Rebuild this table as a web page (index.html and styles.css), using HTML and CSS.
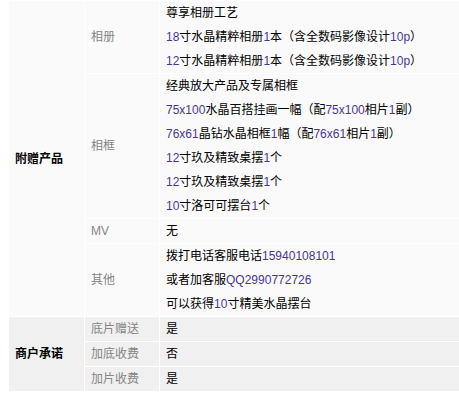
FILE: index.html
```html
<!DOCTYPE html>
<html lang="zh-CN">
<head>
<meta charset="utf-8">
<title>附赠产品</title>
<link rel="stylesheet" href="styles.css">
</head>
<body>
<table class="info">
  <colgroup>
    <col class="c1"><col class="c2"><col class="c3">
  </colgroup>
  <tbody class="sec-a">
    <tr>
      <th class="group" rowspan="4">附赠产品</th>
      <td class="label">相册</td>
      <td class="val">
        <div>尊享相册工艺</div>
        <div><span class="num">18</span>寸水晶精粹相册<span class="num">1</span>本（含全数码影像设计<span class="num">10p</span>）</div>
        <div><span class="num">12</span>寸水晶精粹相册<span class="num">1</span>本（含全数码影像设计<span class="num">10p</span>）</div>
      </td>
    </tr>
    <tr>
      <td class="label">相框</td>
      <td class="val">
        <div>经典放大产品及专属相框</div>
        <div><span class="num">75x100</span>水晶百搭挂画一幅（配<span class="num">75x100</span>相片<span class="num">1</span>副）</div>
        <div><span class="num">76x61</span>晶钻水晶相框<span class="num">1</span>幅（配<span class="num">76x61</span>相片<span class="num">1</span>副）</div>
        <div><span class="num">12</span>寸玖及精致桌摆<span class="num">1</span>个</div>
        <div><span class="num">12</span>寸玖及精致桌摆<span class="num">1</span>个</div>
        <div><span class="num">10</span>寸洛可可摆台<span class="num">1</span>个</div>
      </td>
    </tr>
    <tr>
      <td class="label">MV</td>
      <td class="val">无</td>
    </tr>
    <tr>
      <td class="label">其他</td>
      <td class="val">
        <div>拨打电话客服电话<span class="num">15940108101</span></div>
        <div>或者加客服<span class="num">QQ2990772726</span></div>
        <div>可以获得<span class="num">10</span>寸精美水晶摆台</div>
      </td>
    </tr>
  </tbody>
  <tbody class="sec-b">
    <tr>
      <th class="group" rowspan="3">商户承诺</th>
      <td class="label">底片赠送</td>
      <td class="val">是</td>
    </tr>
    <tr>
      <td class="label">加底收费</td>
      <td class="val">否</td>
    </tr>
    <tr>
      <td class="label">加片收费</td>
      <td class="val">是</td>
    </tr>
  </tbody>
</table>
</body>
</html>
```

FILE: styles.css
```css
html, body {
  margin: 0;
  padding: 0;
  background: #ffffff;
  overflow: hidden;
}

.info {
  margin: 0 0 0 8px;
  border-collapse: separate;
  border-spacing: 1px;
  table-layout: fixed;
  width: 453px;
  font-family: "Liberation Sans", "Noto Sans CJK SC", sans-serif;
  font-size: 12px;
  line-height: 24px;
  color: #000;
}

.c1 { width: 75px; }
.c2 { width: 74px; }

.info th,
.info td {
  padding: 0 0 0 6px;
  vertical-align: middle;
  text-align: left;
  white-space: nowrap;
  overflow: hidden;
}

.sec-a th,
.sec-a td {
  background: #fafafa;
}

.sec-b th,
.sec-b td {
  background: #f0f0f0;
}

.group {
  font-weight: bold;
  color: #000;
}

.label {
  color: #858585;
}

.val div {
  height: 24px;
}

.num {
  color: #4a3596;
}
```
